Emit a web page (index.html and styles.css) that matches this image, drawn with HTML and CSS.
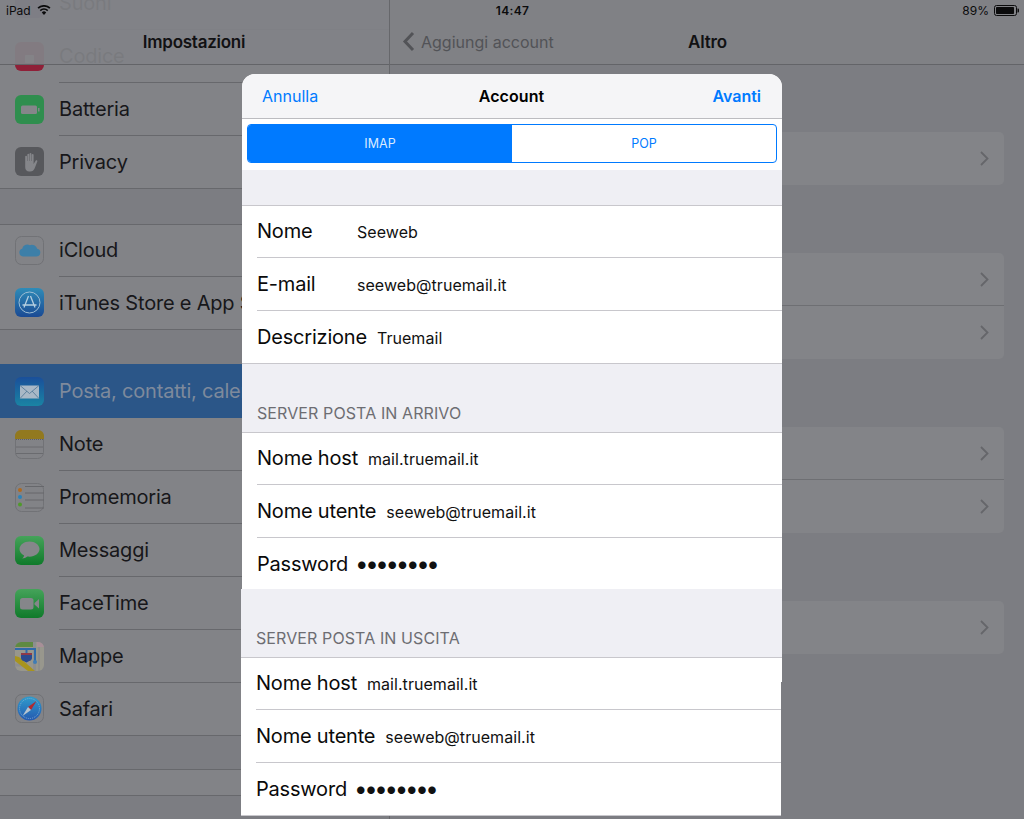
FILE: index.html
```html
<!DOCTYPE html>
<html lang="it">
<head>
<meta charset="utf-8">
<title>Account</title>
<link rel="stylesheet" href="styles.css">
</head>
<body>
<div class="screen">
  <aside class="sidebar">
    <div class="side-head">Impostazioni</div>
    <div class="list">
      <section class="group">
        <div class="row"><svg class="icon" viewBox="0 0 29 29"><rect width="29" height="29" rx="6" fill="#5b4a6e"/></svg><div class="body">Suoni</div></div>
        <div class="row"><svg class="icon" viewBox="0 0 29 29"><rect width="29" height="29" rx="6" fill="#8f2038"/><rect x="10" y="13" width="9" height="8" rx="1" fill="#aa8a92"/></svg><div class="body">Codice</div></div>
        <div class="row"><svg class="icon" viewBox="0 0 29 29"><rect width="29" height="29" rx="6" fill="#2f8e4e"/><rect x="6" y="10.5" width="16" height="8.5" rx="1.5" fill="#85868a"/><rect x="23" y="13" width="1.5" height="3.5" fill="#85868a"/></svg><div class="body">Batteria</div></div>
        <div class="row"><svg class="icon" viewBox="0 0 29 29"><rect width="29" height="29" rx="6" fill="#57585c"/><path d="M10.2 17V9.6a.9.9 0 0 1 1.8 0V14h.4V7.6a.9.9 0 0 1 1.8 0V14h.4V6.8a.9.9 0 0 1 1.8 0V14h.4V8a.9.9 0 0 1 1.8 0v9l2.2-3.4c.5-.8 1.9-.2 1.5.8l-2.6 6.8c-.8 2-2.2 3.3-4.6 3.3h-.8c-2.600 0-4.100-1.700-4.100-4.300V11a.9.9 0 0 1 1.800 0z" fill="#85868a"/></svg><div class="body">Privacy</div></div>
      </section>
      <section class="group gap-36">
        <div class="row row-short"><svg class="icon" viewBox="0 0 29 29"><rect x=".5" y=".5" width="28" height="28" rx="6" fill="#828387" stroke="#717276"/><path d="M8 20.500a4 4 0 0 1-.8-7.800 5 5 0 0 1 7.600-3.500 5.500 5.500 0 0 1 7.400 3.600 3.900 3.900 0 0 1-.4 7.700z" fill="#3d7fa8"/></svg><div class="body">iCloud</div></div>
        <div class="row"><svg class="icon" viewBox="0 0 29 29"><defs><linearGradient id="appstore" x1="0" y1="0" x2="0" y2="1"><stop offset="0" stop-color="#2f8cb8"/><stop offset="1" stop-color="#1a4a94"/></linearGradient></defs><rect width="29" height="29" rx="6" fill="url(#appstore)"/><circle cx="14.500" cy="14.500" r="10.500" fill="none" stroke="#9dbdd4" stroke-width="1"/><path d="M15.500 8l4.500 11.500M13.500 8L9 19.500M7.500 17h14" fill="none" stroke="#b5cfe0" stroke-width="1.300"/></svg><div class="body">iTunes Store e App Store</div></div>
      </section>
      <section class="group gap-35">
        <div class="row row-active"><svg class="icon" viewBox="0 0 29 29"><defs><linearGradient id="mail" x1="0" y1="0" x2="0" y2="1"><stop offset="0" stop-color="#1a4f9a"/><stop offset="1" stop-color="#1a84a4"/></linearGradient></defs><rect width="29" height="29" rx="6" fill="url(#mail)"/><rect x="5" y="8.500" width="19" height="13" fill="#a9b8c6"/><path d="M5 8.500l9.500 8 9.500-8M5 21.500l7-7.500M24 21.500l-7-7.500" fill="none" stroke="#4f7696" stroke-width=".8"/></svg><div class="body">Posta, contatti, calendari</div></div>
        <div class="row"><svg class="icon" viewBox="0 0 29 29"><rect x=".5" y=".5" width="28" height="28" rx="6" fill="#828387" stroke="#717276"/><path d="M0 9V6a6 6 0 0 1 6-6h17a6 6 0 0 1 6 6v3z" fill="#92791f"/><path d="M1 9.500h27" stroke="#5f6064" stroke-dasharray="1 1"/><path d="M1 17h27M1 23.500h27" stroke="#6a6b6f"/></svg><div class="body">Note</div></div>
        <div class="row"><svg class="icon" viewBox="0 0 29 29"><rect x=".5" y=".5" width="28" height="28" rx="6" fill="#828387" stroke="#717276"/><circle cx="5" cy="7" r="2" fill="#b06a1e"/><circle cx="5" cy="14" r="2" fill="#2a82ba"/><circle cx="5" cy="21.500" r="2" fill="#4f9a2a"/><path d="M10 3.500h19M10 10h19M10 17h19M10 25h19" stroke="#66676b"/></svg><div class="body">Promemoria</div></div>
        <div class="row"><svg class="icon" viewBox="0 0 29 29"><defs><linearGradient id="green" x1="0" y1="0" x2="0" y2="1"><stop offset="0" stop-color="#45a35a"/><stop offset="1" stop-color="#0f7a2a"/></linearGradient></defs><rect width="29" height="29" rx="6" fill="url(#green)"/><path d="M14.500 5.500c-5.500 0-10 3.400-10 7.600 0 2.700 1.800 5 4.600 6.400-.3 1.200-1 2.300-2 3 2 0 3.800-.7 5.200-1.900.7.100 1.400.100 2.200.100 5.500 0 10-3.400 10-7.600s-4.500-7.600-10-7.600z" fill="#85868a"/></svg><div class="body">Messaggi</div></div>
        <div class="row"><svg class="icon" viewBox="0 0 29 29"><rect width="29" height="29" rx="6" fill="url(#green)"/><rect x="5" y="9" width="13.500" height="11.500" rx="2.500" fill="#85868a"/><path d="M19.500 14l4.500-4v9.500l-4.500-4z" fill="#85868a"/></svg><div class="body">FaceTime</div></div>
        <div class="row"><svg class="icon" viewBox="0 0 29 29"><defs><clipPath id="mapclip"><rect width="29" height="29" rx="6"/></clipPath></defs><g clip-path="url(#mapclip)"><rect width="29" height="29" fill="#98978d"/><rect width="18" height="5" fill="#5f8a42"/><rect x="22" width="7" height="5" fill="#a88f98"/><path d="M19.500 0v29M0 23h12" stroke="#8d8e90" stroke-width="3"/><path d="M24 5v24" stroke="#85868a" stroke-width="1"/><path d="M0 19l13 10h7L4 15 0 14z" fill="#a8941e"/><path d="M0 7h11.500V16M11.500 7H20v13" fill="none" stroke="#2f6aaa" stroke-width="2"/><path d="M6 11h11v5c0 2.500-3 3-5.500 4.500C9 19 6 18.500 6 16z" fill="#2b4a8e"/><path d="M6 11h11v2H6z" fill="#8f3a48"/><circle cx="20" cy="20" r="2" fill="#3f7cb5"/></g></svg><div class="body">Mappe</div></div>
        <div class="row"><svg class="icon" viewBox="0 0 29 29"><defs><linearGradient id="safari" x1="0" y1="0" x2="0" y2="1"><stop offset="0" stop-color="#2f9ccc"/><stop offset="1" stop-color="#2559b0"/></linearGradient></defs><rect x=".5" y=".5" width="28" height="28" rx="6" fill="#828387" stroke="#717276"/><circle cx="14.500" cy="14.500" r="12" fill="url(#safari)"/><circle cx="14.500" cy="14.500" r="10" fill="none" stroke="#8fb6d2" stroke-width=".8" stroke-dasharray="1 1"/><path d="M21.500 7l-8.500 6 3 3z" fill="#b02a30"/><path d="M7.500 22l5.500-9 3 3z" fill="#b7c4d0"/></svg><div class="body">Safari</div></div>
      </section>
      <section class="group gap-34 group-empty"></section>
    </div>
  </aside>

  <main class="detail">
    <header class="detail-head">
      <div class="back">
        <svg class="back-chevron" viewBox="0 0 13 21"><path d="M11 2L3 10.500 11 19" fill="none" stroke="currentColor" stroke-width="3"/></svg>
        <span>Aggiungi account</span>
      </div>
      <div class="detail-title">Altro</div>
    </header>
    <div class="cards">
      <div class="card"><div class="card-row"><svg class="chevron" viewBox="0 0 9 15"><path d="M1 1l6.500 6.500L1 14" fill="none" stroke="currentColor" stroke-width="1.800"/></svg></div></div>
      <div class="card"><div class="card-row card-line"><svg class="chevron" viewBox="0 0 9 15"><path d="M1 1l6.500 6.500L1 14" fill="none" stroke="currentColor" stroke-width="1.800"/></svg></div><div class="card-row"><svg class="chevron" viewBox="0 0 9 15"><path d="M1 1l6.500 6.500L1 14" fill="none" stroke="currentColor" stroke-width="1.800"/></svg></div></div>
      <div class="card"><div class="card-row card-line"><svg class="chevron" viewBox="0 0 9 15"><path d="M1 1l6.500 6.500L1 14" fill="none" stroke="currentColor" stroke-width="1.800"/></svg></div><div class="card-row"><svg class="chevron" viewBox="0 0 9 15"><path d="M1 1l6.500 6.500L1 14" fill="none" stroke="currentColor" stroke-width="1.800"/></svg></div></div>
      <div class="card"><div class="card-row"><svg class="chevron" viewBox="0 0 9 15"><path d="M1 1l6.500 6.500L1 14" fill="none" stroke="currentColor" stroke-width="1.800"/></svg></div></div>
    </div>
  </main>

  <div class="status">
    <div class="status-left">
      <span>iPad</span>
      <svg class="wifi" viewBox="0 0 14 10"><path d="M7 10L4.800 7.400a3.200 3.200 0 0 1 4.400 0zM3.800 6.200L2.700 5a6.300 6.300 0 0 1 8.600 0l-1.100 1.200a4.700 4.700 0 0 0-6.400 0zM1.700 3.800L.5 2.500a9.600 9.600 0 0 1 13 0l-1.200 1.300a7.900 7.900 0 0 0-10.600 0z" fill="#0b0b0c"/></svg>
    </div>
    <div class="status-time">14:47</div>
    <div class="status-right">
      <span>89%</span>
      <svg class="battery" viewBox="0 0 25 11"><rect x=".5" y=".5" width="22" height="10" rx="2" fill="none" stroke="#0b0b0c"/><rect x="2" y="2" width="18" height="7" rx=".8" fill="#0b0b0c"/><path d="M23.500 3.500h.5a1 1 0 0 1 1 1v2a1 1 0 0 1-1 1h-.5z" fill="#0b0b0c"/></svg>
    </div>
  </div>

  <div class="sheet">
    <div class="sheet-top">
      <div class="nav">
        <span class="nav-btn">Annulla</span>
        <span class="nav-title">Account</span>
        <span class="nav-btn nav-strong">Avanti</span>
      </div>
      <div class="seg-wrap">
        <div class="seg">
          <div class="seg-item seg-on">IMAP</div>
          <div class="seg-item">POP</div>
        </div>
      </div>
      <div class="spacer"></div>
      <div class="table">
        <div class="field"><span class="label label-wide">Nome</span><span class="value">Seeweb</span></div>
        <div class="field"><span class="label label-wide">E-mail</span><span class="value">seeweb@truemail.it</span></div>
        <div class="field field-last"><span class="label">Descrizione</span><span class="value">Truemail</span></div>
      </div>
      <div class="caption">Server posta in arrivo</div>
      <div class="table table-open">
        <div class="field"><span class="label">Nome host</span><span class="value">mail.truemail.it</span></div>
        <div class="field"><span class="label">Nome utente</span><span class="value">seeweb@truemail.it</span></div>
        <div class="field field-last"><span class="label">Password</span><span class="dots">••••••••</span></div>
      </div>
    </div>
    <div class="sheet-bottom">
      <div class="caption">Server posta in uscita</div>
      <div class="table">
        <div class="field"><span class="label">Nome host</span><span class="value">mail.truemail.it</span></div>
        <div class="field"><span class="label">Nome utente</span><span class="value">seeweb@truemail.it</span></div>
        <div class="field field-last"><span class="label">Password</span><span class="dots">••••••••</span></div>
      </div>
    </div>
    <div class="seam"></div>
  </div>
</div>
</body>
</html>
```

FILE: styles.css
```css
* { box-sizing: border-box; }
html, body { margin: 0; padding: 0; }
body {
  width: 1024px;
  height: 819px;
  overflow: hidden;
  font-family: Inter, "Liberation Sans", sans-serif;
  background: #7c7d82;
}
.screen {
  position: relative;
  display: flex;
  width: 1024px;
  height: 819px;
  overflow: hidden;
}

/* left pane */
.sidebar {
  position: relative;
  flex: 0 0 390px;
  height: 819px;
  overflow: hidden;
  border-right: 1px solid #66676b;
}
.side-head {
  position: absolute;
  left: 0;
  top: 0;
  z-index: 2;
  width: 100%;
  height: 65px;
  padding-top: 32px;
  padding-right: 1px;
  text-align: center;
  font-size: 17px;
  font-weight: 600;
  line-height: 20px;
  letter-spacing: -0.25px;
  color: #111113;
  background: rgba(129, 130, 134, 0.93);
  border-bottom: 1px solid #636468;
}
.list { margin-top: -23px; }
.group {
  background: #828387;
  border-bottom: 1px solid #67686c;
}
.gap-36 { margin-top: 35px; border-top: 1px solid #67686c; }
.gap-35 { margin-top: 34px; border-top: 1px solid #2b5688; }
.gap-34 { margin-top: 33px; border-top: 1px solid #67686c; }
.group-empty { height: 27px; }
.row {
  display: flex;
  align-items: center;
  height: 53px;
  padding-left: 15px;
  color: #17171a;
}
.row:last-child { height: 52px; }
.row-short { height: 52px; }
.row-short .body { padding-bottom: 2px; }
.icon {
  flex: 0 0 29px;
  width: 29px;
  height: 29px;
  margin: 0 15px 1px 0;
}
.body {
  flex: 1;
  height: 100%;
  display: flex;
  align-items: center;
  font-size: 20px;
  letter-spacing: -0.2px;
  white-space: nowrap;
  border-bottom: 1px solid #67686c;
}
.row:last-child .body { border-bottom: 0; }
.row-active {
  background: #2b5688;
  color: #7e8a9c;
}
.row-active .body { border-bottom-color: #2b5688; }

/* right pane */
.detail {
  flex: 1;
  height: 819px;
}
.detail-head {
  position: relative;
  height: 65px;
  padding-top: 32px;
  text-align: center;
  font-size: 17px;
  line-height: 20px;
  background: #808185;
  border-bottom: 1px solid #636468;
}
.detail-title {
  font-weight: 600;
  color: #111113;
  padding-left: 1px;
  letter-spacing: -0.2px;
}
.back {
  position: absolute;
  left: 12px;
  top: 31px;
  display: flex;
  align-items: center;
  gap: 6px;
  color: #525357;
  font-size: 16px;
}
.back-chevron { width: 13px; height: 21px; }
.cards {
  display: flex;
  flex-direction: column;
  gap: 68px;
  padding: 67px 20px 0 20px;
}
.card {
  background: #838488;
  border-radius: 5px;
}
.card-row {
  display: flex;
  align-items: center;
  justify-content: flex-end;
  height: 53px;
  padding-right: 15px;
  color: #65666a;
}
.card-line { border-bottom: 1px solid #6e6f73; }
.chevron { width: 9px; height: 15px; }

/* status bar */
.status {
  position: absolute;
  left: 0;
  top: 0;
  z-index: 3;
  display: flex;
  align-items: center;
  justify-content: space-between;
  width: 100%;
  height: 20px;
  padding: 0 5px 0 6px;
  font-size: 12px;
  color: #0b0b0c;
}
.status-left, .status-right {
  display: flex;
  align-items: center;
  flex: 1;
}
.status-left { gap: 6px; }
.status-right { justify-content: flex-end; gap: 5px; }
.status-time { font-weight: 600; letter-spacing: 0.3px; }
.wifi { width: 14px; height: 10px; }
.battery { width: 25px; height: 11px; }

/* modal sheet */
.sheet {
  position: absolute;
  left: 241px;
  top: 74px;
  z-index: 4;
  width: 541px;
  height: 745px;
  overflow: hidden;
}
.sheet-top {
  margin-left: 1px;
  width: 540px;
  background: #fff;
  border-radius: 13px 13px 0 0;
  overflow: hidden;
}
.nav {
  display: grid;
  grid-template-columns: 1fr auto 1fr;
  align-items: center;
  height: 45px;
  padding: 0 21px 0 20px;
  background: #f5f5f7;
  border-bottom: 1px solid #bcbcc0;
  font-size: 16px;
  color: #007aff;
}
.nav-title { font-weight: 600; color: #000; letter-spacing: 0.1px; }
.nav-strong { font-weight: 600; justify-self: end; }
.seg-wrap {
  height: 51px;
  padding: 5px 5px 0;
  background: #fff;
}
.seg {
  display: flex;
  height: 39px;
  border: 1px solid #007aff;
  border-radius: 4px;
  overflow: hidden;
}
.seg-item {
  flex: 1;
  display: flex;
  align-items: center;
  justify-content: center;
  font-size: 12.500px;
  color: #007aff;
}
.seg-on {
  background: #007aff;
  color: #dbeaff;
}
.spacer {
  height: 35px;
  background: #efeff4;
}
.table {
  background: #fff;
  border-top: 1px solid #c8c7cc;
}
.field {
  display: flex;
  align-items: center;
  height: 53px;
  margin-left: 15px;
  gap: 10px;
  border-bottom: 1px solid #c8c7cc;
}
.field:first-child { height: 52px; padding-bottom: 2px; }
.field-last {
  margin-left: 0;
  padding-left: 15px;
}
.table-open .field-last { border-bottom: 0; height: 51px; }
.label { font-size: 20px; color: #0a0a0a; letter-spacing: -0.2px; white-space: nowrap; }
.label-wide { min-width: 90px; }
.value { margin-top: 2px; font-size: 16px; letter-spacing: 0.05px; color: #111; white-space: nowrap; }
.dots { margin-left: -3px; font-size: 24px; line-height: 24px; letter-spacing: -3.300px; color: #111; }
.caption {
  height: 68px;
  padding: 39px 0 0 15px;
  background: #efeff4;
  font-size: 16px;
  line-height: 20px;
  letter-spacing: 0.1px;
  text-transform: uppercase;
  color: #6d6d72;
}
.sheet-bottom {
  width: 541px;
  background: #efeff4;
}
.sheet-bottom .table { padding-right: 1px; }
.seam {
  position: absolute;
  right: 0;
  top: 608px;
  width: 1px;
  height: 137px;
  background: #7c7d82;
}
```
